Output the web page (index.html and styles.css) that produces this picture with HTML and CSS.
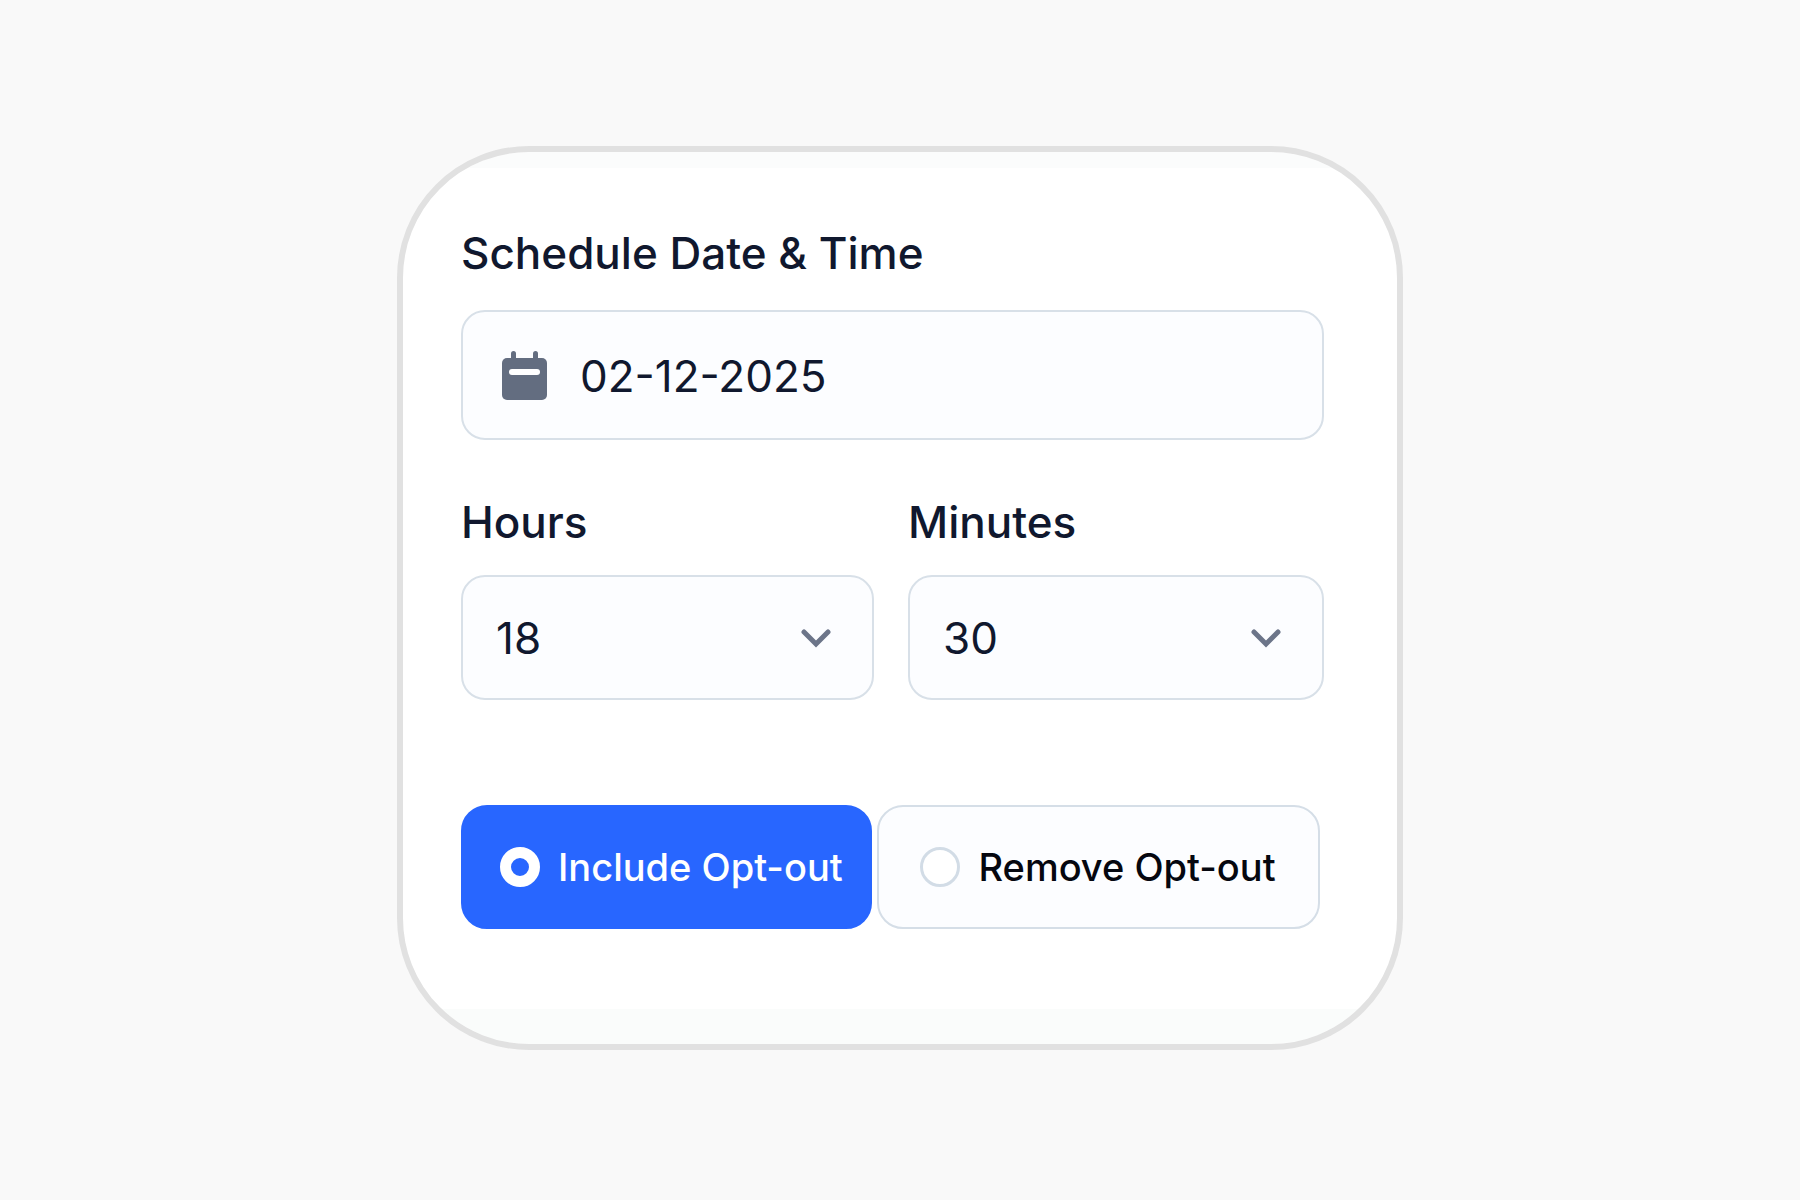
FILE: index.html
```html
<!DOCTYPE html>
<html lang="en">
<head>
    <meta charset="UTF-8">
    <meta name="viewport" content="width=device-width, initial-scale=1.0">
    <title>Schedule Date &amp; Time</title>
    <link rel="stylesheet" href="styles.css">
</head>
<body>
    <form class="card">
        <div class="field date-field">
            <label for="date">Schedule Date &amp; Time</label>
            <div class="control date-control">
                <svg class="calendar-icon" viewBox="0 0 46 50" aria-hidden="true">
                    <rect x="9" y="0" width="5" height="14" rx="2.5"/>
                    <rect x="31" y="0" width="5" height="14" rx="2.5"/>
                    <rect x="0" y="7" width="45" height="42" rx="5"/>
                    <rect class="calendar-line" x="7" y="18" width="31" height="6" rx="3"/>
                </svg>
                <input type="text" id="date" value="02-12-2025">
            </div>
        </div>

        <div class="time-row">
            <div class="field">
                <label for="hours">Hours</label>
                <div class="control select-control">
                    <select id="hours">
                        <option>00</option>
                        <option>06</option>
                        <option>12</option>
                        <option selected>18</option>
                    </select>
                    <svg class="chevron" viewBox="0 0 30 20" aria-hidden="true">
                        <path d="M3 4l12 12L27 4"/>
                    </svg>
                </div>
            </div>
            <div class="field">
                <label for="minutes">Minutes</label>
                <div class="control select-control">
                    <select id="minutes">
                        <option>00</option>
                        <option>15</option>
                        <option selected>30</option>
                        <option>45</option>
                    </select>
                    <svg class="chevron" viewBox="0 0 30 20" aria-hidden="true">
                        <path d="M3 4l12 12L27 4"/>
                    </svg>
                </div>
            </div>
        </div>

        <div class="options">
            <label class="option" for="include">
                <input type="radio" id="include" name="optout" value="include" checked>
                <span>Include Opt-out</span>
            </label>
            <label class="option" for="remove">
                <input type="radio" id="remove" name="optout" value="remove">
                <span>Remove Opt-out</span>
            </label>
        </div>
    </form>
</body>
</html>
```
FILE: styles.css
```css
* {
    box-sizing: border-box;
}

body {
    font-family: Inter, "Liberation Sans", sans-serif;
    background: #f9f9f9;
    color: #10182e;
    display: flex;
    justify-content: center;
    align-items: center;
    min-height: 100vh;
    margin: 0;
    padding-bottom: 4px;
}

.card {
    width: 100%;
    max-width: 1006px;
    padding: 73px 73px 115px 58px;
    border: 6px solid #e1e1e1;
    border-radius: 132px;
    /* faint strips along the top and bottom edges */
    background:
        linear-gradient(#fbfcfc, #fbfcfc) top / 100% 16px no-repeat padding-box,
        linear-gradient(#fafcfb, #fafcfb) bottom / 100% 35px no-repeat padding-box,
        #fff;
}

.field label {
    display: block;
    margin-bottom: 25px;
    font-size: 44px;
    font-weight: 500;
    line-height: 56px;
}

.date-field label {
    margin-bottom: 29px;
}

.control {
    display: flex;
    align-items: center;
    border: 2px solid #d8e0e8;
    border-radius: 24px;
    background: #fcfdff;
}

input[type="text"], select {
    flex: 1;
    min-width: 0;
    width: 100%;
    margin: 0;
    border: none;
    outline: none;
    background: transparent;
    color: inherit;
    font-family: inherit;
    font-size: 44px;
}

.date-control {
    height: 130px;
    gap: 32px;
    padding: 2px 39px 0;
}

.date-control input {
    padding: 0;
}

.calendar-icon {
    width: 46px;
    height: 50px;
    fill: #636d80;
}

.calendar-line {
    fill: #fff;
}

.time-row {
    display: grid;
    grid-template-columns: 413fr 416fr;
    gap: 34px;
    margin-top: 54px;
}

.select-control {
    display: grid;
    height: 125px;
}

.select-control select, .chevron {
    grid-area: 1 / 1;
}

select {
    height: 100%;
    padding: 0 80px 0 33px;
    appearance: none;
    cursor: pointer;
}

.chevron {
    width: 30px;
    height: 20px;
    margin-right: 41px;
    justify-self: end;
    fill: none;
    stroke: #6c7589;
    stroke-width: 5;
    stroke-linecap: round;
    pointer-events: none;
}

.options {
    display: grid;
    grid-template-columns: 411fr 442fr;
    gap: 5px;
    margin: 105px 4px 0 0;
}

.option {
    display: flex;
    align-items: center;
    gap: 18px;
    height: 124px;
    padding-left: 37px;
    border: 2px solid #d5dee7;
    border-radius: 26px;
    background: #fcfdff;
    color: #05070f;
    font-size: 38px;
    font-weight: 500;
    white-space: nowrap;
    cursor: pointer;
}

.option + .option {
    padding-left: 41px;
}

.option:has(input:checked) {
    border-color: #2866ff;
    background: #2866ff;
    color: #fff;
}

input[type="radio"] {
    appearance: none;
    flex: none;
    width: 40px;
    height: 40px;
    margin: 0;
    border: 3px solid #d2dce6;
    border-radius: 50%;
    background: #fff;
}

input[type="radio"]:checked {
    border: 11px solid #fff;
    background: #2866ff;
}
```
